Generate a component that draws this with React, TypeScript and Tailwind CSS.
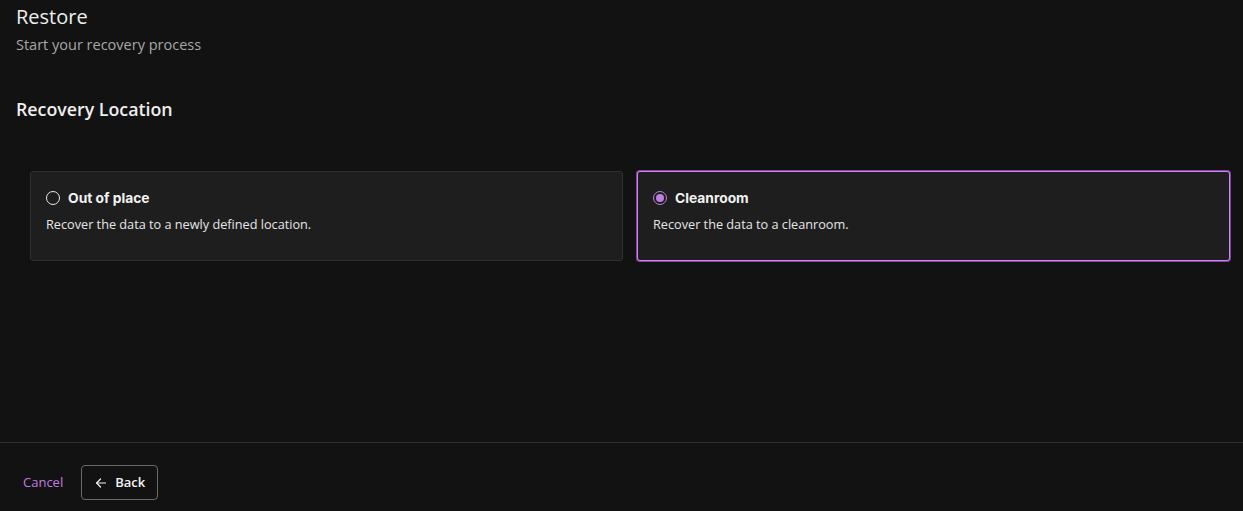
import { useState } from "react";

type Option = {
  id: string;
  title: string;
  description: string;
};

const options: Option[] = [
  { id: "out-of-place", title: "Out of place", description: "Recover the data to a newly defined location." },
  { id: "cleanroom", title: "Cleanroom", description: "Recover the data to a cleanroom." },
];

function Radio({ checked }: { checked: boolean }) {
  return checked ? (
    <span className="flex h-[14px] w-[14px] items-center justify-center rounded-full border-[1.5px] border-[#c07ee0]">
      <span className="h-[8px] w-[8px] rounded-full bg-[#c07ee0]" />
    </span>
  ) : (
    <span className="h-[14px] w-[14px] rounded-full border-[1.5px] border-[#e8e8e8]" />
  );
}

export default function App() {
  const [selected, setSelected] = useState("cleanroom");

  return (
    <div className="flex h-[511px] flex-col bg-[#121212] font-['Open_Sans','Noto_Sans',sans-serif] text-[#eeeeee]">
      <div className="flex-1 px-4 pt-[3px]">
        <h1 className="text-[20px] leading-[28px]">Restore</h1>
        <p className="mt-[4px] text-[14.5px] leading-[20px] text-[#a8a8a8]">Start your recovery process</p>
        <h2 className="mt-[42px] text-[17.8px] font-semibold leading-[24px]">Recovery Location</h2>

        <div className="mt-[50px] mr-[-3px] grid grid-cols-2 gap-[14px] pl-[14px]">
          {options.map((opt) => {
            const active = selected === opt.id;
            return (
              <div
                key={opt.id}
                role="radio"
                aria-checked={active}
                onClick={() => setSelected(opt.id)}
                className={
                  active
                    ? "h-[90px] cursor-pointer rounded-[3px] border border-[#c98be6] bg-[#1e1e1e] px-[15px] pt-[17px] ring-1 ring-[#8a3fae]"
                    : "h-[90px] cursor-pointer rounded-[3px] border border-[#2f2f2f] bg-[#1e1e1e] px-[15px] pt-[17px]"
                }
              >
                <div className="flex items-center gap-[8px]">
                  <Radio checked={active} />
                  <span className="font-['Inter',sans-serif] text-[13.8px] font-bold leading-[18px] text-[#f2f2f2]">
                    {opt.title}
                  </span>
                </div>
                <p className="mt-[8px] text-[12.7px] leading-[18px] text-[#e6e6e6]">{opt.description}</p>
              </div>
            );
          })}
        </div>
      </div>

      <div className="flex h-[69px] items-start gap-[18px] border-t border-[#2e2e2e] px-[23px] pt-[22px]">
        <button className="mt-[8px] text-[13px] leading-[18px] text-[#c07ee0]">Cancel</button>
        <button className="flex h-[35px] items-center gap-[9px] rounded-[4px] border border-[#6a6a6a] pl-[14px] pr-[12px] text-[13px] font-semibold text-[#f2f2f2]">
          <svg width="10" height="10" viewBox="0 0 10 10" fill="none" stroke="currentColor" strokeWidth="1.2" strokeLinecap="round" strokeLinejoin="round">
            <path d="M9.5 5H0.6" />
            <path d="M4.5 1L0.6 5L4.5 9" />
          </svg>
          Back
        </button>
      </div>
    </div>
  );
}
